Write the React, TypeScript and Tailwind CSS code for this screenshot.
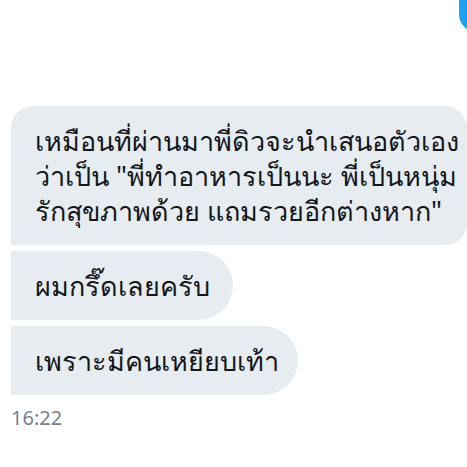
export default function App() {
  const bubble =
    "bg-[#e6ecf0] text-[#14171a] text-[27px] leading-[35px] pl-[24px] pr-[18px] py-[17px]";

  return (
    <div className="w-[467px] h-[467px] overflow-hidden bg-white font-['Noto_Sans',sans-serif]">
      {/* tail of the previous outgoing message */}
      <div className="flex justify-end h-[32px]">
        <div className="w-[8px] h-full overflow-hidden">
          <div className="w-[30px] h-full bg-[#1da1f2] rounded-bl-[18px]" />
        </div>
      </div>

      <div className="pt-[74px] pl-[11px] flex flex-col items-start gap-[6px]">
        <div className={`${bubble} w-[456px] rounded-tl-[22px] rounded-r-[22px] whitespace-nowrap`}>
          เหมือนที่ผ่านมาพี่ดิวจะนำเสนอตัวเอง
          <br />
          ว่าเป็น "พี่ทำอาหารเป็นนะ พี่เป็นหนุ่ม
          <br />
          รักสุขภาพด้วย แถมรวยอีกต่างหาก"
        </div>
        <div className={`${bubble} w-[222px] rounded-r-[35px]`}>ผมกรึ๊ดเลยครับ</div>
        <div className={`${bubble} w-[287px] rounded-r-[35px] whitespace-nowrap`}>เพราะมีคนเหยียบเท้า</div>
      </div>

      <div className="pl-[11px] pt-[10px] text-[20px] leading-[26px] text-[#758390]">16:22</div>
    </div>
  );
}
